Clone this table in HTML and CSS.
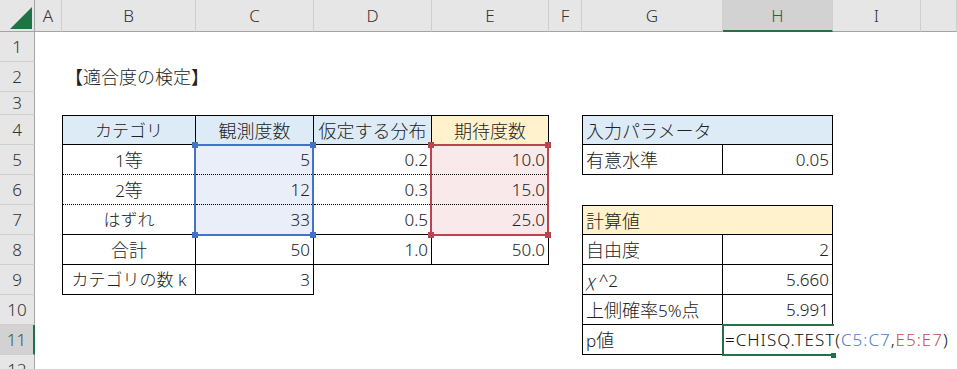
FILE: index.html
```html
<!DOCTYPE html>
<html lang="ja">
<head>
<meta charset="utf-8">
<title>適合度の検定</title>
<link rel="stylesheet" href="styles.css">
</head>
<body>
<div class="sheet">
  <!-- column headers -->
  <div class="ch corner"><svg class="tri" width="35" height="32" viewBox="0 0 35 32"><polygon points="10,29 32,29 32,7" fill="#217346"/></svg></div>
  <div class="ch">A</div>
  <div class="ch">B</div>
  <div class="ch">C</div>
  <div class="ch">D</div>
  <div class="ch">E</div>
  <div class="ch">F</div>
  <div class="ch">G</div>
  <div class="ch sel">H</div>
  <div class="ch">I</div>
  <div class="ch"></div>

  <!-- row 1 -->
  <div class="rh">1</div>
  <div class="c span10"></div>

  <!-- row 2 -->
  <div class="rh">2</div>
  <div class="c"></div>
  <div class="c lft title"><span class="j">【適合度の検定】</span></div>
  <div class="c span8"></div>

  <!-- row 3 -->
  <div class="rh short">3</div>
  <div class="c span10"></div>

  <!-- row 4 -->
  <div class="rh">4</div>
  <div class="c"></div>
  <div class="c ctr bt bl br bb blue">カテゴリ</div>
  <div class="c ctr bt br bb blue"><span class="j">観測度数</span></div>
  <div class="c ctr bt br bb blue"><span class="j">仮定する分布</span></div>
  <div class="c ctr bt br bb yellow"><span class="j">期待度数</span></div>
  <div class="c"></div>
  <div class="c lft bt bl br bb blue span2"><span class="j">入力パラメータ</span></div>
  <div class="c"></div>
  <div class="c"></div>

  <!-- row 5 -->
  <div class="rh">5</div>
  <div class="c"></div>
  <div class="c ctr bl br bd">1<span class="j">等</span></div>
  <div class="c num br bd tint-b">5</div>
  <div class="c num br bd">0.2</div>
  <div class="c num br bd tint-r">10.0</div>
  <div class="c"></div>
  <div class="c lft bl br bb"><span class="j">有意水準</span></div>
  <div class="c num br bb">0.05</div>
  <div class="c"></div>
  <div class="c"></div>

  <!-- row 6 -->
  <div class="rh">6</div>
  <div class="c"></div>
  <div class="c ctr bl br bd">2<span class="j">等</span></div>
  <div class="c num br bd tint-b">12</div>
  <div class="c num br bd">0.3</div>
  <div class="c num br bd tint-r">15.0</div>
  <div class="c span5"></div>

  <!-- row 7 -->
  <div class="rh">7</div>
  <div class="c"></div>
  <div class="c ctr bl br bb">はずれ</div>
  <div class="c num br bb tint-b">33</div>
  <div class="c num br bb">0.5</div>
  <div class="c num br bb tint-r">25.0</div>
  <div class="c"></div>
  <div class="c lft bt bl br bb yellow span2"><span class="j">計算値</span></div>
  <div class="c"></div>
  <div class="c"></div>

  <!-- row 8 -->
  <div class="rh">8</div>
  <div class="c"></div>
  <div class="c ctr bl br bb"><span class="j">合計</span></div>
  <div class="c num br bb">50</div>
  <div class="c num br bb">1.0</div>
  <div class="c num br bb">50.0</div>
  <div class="c"></div>
  <div class="c lft bl br bb"><span class="j">自由度</span></div>
  <div class="c num br bb">2</div>
  <div class="c"></div>
  <div class="c"></div>

  <!-- row 9 -->
  <div class="rh">9</div>
  <div class="c"></div>
  <div class="c ctr bl br bb">カテゴリの数 k</div>
  <div class="c num br bb">3</div>
  <div class="c"></div>
  <div class="c"></div>
  <div class="c"></div>
  <div class="c lft bl br bb"><span class="chi">χ</span>^2</div>
  <div class="c num br bb">5.660</div>
  <div class="c"></div>
  <div class="c"></div>

  <!-- row 10 -->
  <div class="rh">10</div>
  <div class="c span6"></div>
  <div class="c lft bl br bb"><span class="j">上側確率</span>5%<span class="j">点</span></div>
  <div class="c num br bb">5.991</div>
  <div class="c"></div>
  <div class="c"></div>

  <!-- row 11 -->
  <div class="rh sel">11</div>
  <div class="c span6"></div>
  <div class="c lft bl br bb">p<span class="j">値</span></div>
  <div class="c"></div>
  <div class="c"></div>
  <div class="c"></div>

  <!-- row 12 -->
  <div class="rh">12</div>
  <div class="c span10"></div>

  <!-- overlays: reference ranges and active cell -->
  <div class="ref ref-c"><span class="hd h-tl"></span><span class="hd h-tr"></span><span class="hd h-bl"></span><span class="hd h-br"></span></div>
  <div class="ref ref-e"><span class="hd h-tl"></span><span class="hd h-tr"></span><span class="hd h-bl"></span><span class="hd h-br"></span></div>
  <div class="active"></div>
  <div class="formula">=CHISQ.TEST(<span class="fb">C5:C7</span>,<span class="fr">E5:E7</span>)</div>
  <div class="active-handle"></div>
</div>
</body>
</html>
```

FILE: styles.css
```css
* {
  box-sizing: border-box;
  margin: 0;
  padding: 0;
}

html, body {
  background: #fff;
}

body {
  width: 957px;
  height: 369px;
  overflow: hidden;
  font-family: "Noto Sans", "Noto Sans CJK JP", sans-serif;
  font-size: 17px;
  font-weight: 300;
  color: #222;
}

.sheet {
  position: relative;
  display: grid;
  grid-template-columns: 35px 27px 134px 118px 118px 117px 33px 141px 110px 88px 36px;
  grid-template-rows: 32px 30px 30px 23px repeat(9, 30px);
}

/* headers */
.ch {
  background: #e6e6e6;
  border-right: 1px solid #cfcfcf;
  border-bottom: 1px solid #a3a3a3;
  text-align: center;
  line-height: 32px;
  color: #333;
}

.ch.corner {
  border-right-color: #a3a3a3;
}

.tri {
  display: block;
}

.ch.sel {
  background: #d2d2d2;
  border-bottom: 2px solid #217346;
  color: #2f5e43;
}

.rh {
  background: #e6e6e6;
  border-right: 1px solid #a3a3a3;
  border-bottom: 1px solid #cfcfcf;
  text-align: center;
  line-height: 30px;
  color: #333;
}

.rh.short {
  line-height: 22px;
}

.rh.sel {
  background: #d2d2d2;
  border-right: 2px solid #217346;
  color: #2f5e43;
}

/* cells */
.c {
  line-height: 30px;
  white-space: nowrap;
  min-width: 0;
}

.j {
  font-size: 18px;
}

.chi {
  font-family: "Noto Sans CJK JP", sans-serif;
  font-style: italic;
  margin-right: 4px;
}

.ctr { text-align: center; }
.num { text-align: right; padding-right: 3px; }
.lft { padding-left: 3px; }

.bt { border-top: 1px solid #000; }
.bl { border-left: 1px solid #000; }
.br { border-right: 1px solid #000; }
.bb { border-bottom: 1px solid #000; }
.bd { border-bottom: 1px dotted #000; }

.blue { background: #ddebf7; }
.yellow { background: #fff2cc; }
.tint-b { background: #e9eef9; }
.tint-r { background: #fae9eb; }

.span2 { grid-column: span 2; }
.span5 { grid-column: span 5; }
.span6 { grid-column: span 6; }
.span8 { grid-column: span 8; }
.span10 { grid-column: span 10; }

/* reference range highlights */
.ref {
  position: absolute;
  grid-row: 6 / 9;
  top: -1px;
  bottom: -1px;
  left: -2px;
  right: 0;
  border: 2px solid currentColor;
}

.ref-c {
  grid-column: 4 / 5;
  color: #4472c4;
}

.ref-e {
  grid-column: 6 / 7;
  color: #bc4450;
}

.hd {
  position: absolute;
  width: 6px;
  height: 6px;
  background: currentColor;
}

.h-tl { top: -4px; left: -4px; }
.h-tr { top: -4px; right: -4px; }
.h-bl { bottom: -4px; left: -4px; }
.h-br { bottom: -4px; right: -4px; }

/* active cell */
.active {
  position: absolute;
  grid-column: 9 / 10;
  grid-row: 12 / 13;
  top: -1px;
  left: -1px;
  bottom: -1px;
  right: -1px;
  border: 2px solid #217346;
  border-right: none;
}

.formula {
  position: absolute;
  grid-column: 9 / 10;
  grid-row: 12 / 13;
  left: 2px;
  top: 1px;
  height: 27px;
  line-height: 28px;
  background: #fff;
  white-space: nowrap;
  letter-spacing: 1px;
  color: #111;
  padding-right: 4px;
}

.fb { color: #4f7bc8; }
.fr { color: #c0504d; }

.active-handle {
  position: absolute;
  grid-column: 9 / 10;
  grid-row: 12 / 13;
  right: -3px;
  bottom: -3px;
  width: 5px;
  height: 5px;
  background: #217346;
}
```
